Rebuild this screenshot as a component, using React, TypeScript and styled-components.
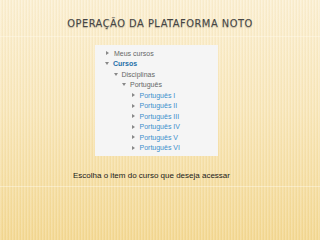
import React from "react";
import styled, { createGlobalStyle } from "styled-components";

const Global = createGlobalStyle`
  html, body { margin: 0; padding: 0; }
  body { font-family: "Liberation Sans", Arial, sans-serif; }
`;

const Page = styled.div`
  width: 320px;
  height: 240px;
  overflow: hidden;
  box-sizing: border-box;
  padding-top: 17px;
  display: flex;
  flex-direction: column;
  background:
    repeating-linear-gradient(90deg, rgba(255,255,255,0.16) 0px, rgba(255,255,255,0.16) 1px, rgba(200,160,60,0.07) 2px, rgba(200,160,60,0.07) 3px),
    linear-gradient(180deg, #fcf1d6 0%, #f9e8bd 45%, #f4d994 100%);
`;

const Title = styled.h1`
  margin: 0;
  height: 14px;
  line-height: 14px;
  text-align: center;
  font-family: "DejaVu Sans Condensed", "DejaVu Sans", sans-serif;
  font-stretch: condensed;
  font-weight: normal;
  font-size: 11px;
  letter-spacing: 0.5px;
  color: #454545;
  text-shadow: 0 1px 1px rgba(0, 0, 0, 0.25);
`;

const Divider = styled.div<{ $top: number }>`
  height: 1px;
  margin-top: ${(p) => p.$top}px;
  background: rgba(255, 250, 235, 0.45);
`;

const Panel = styled.div`
  margin: 8px 0 0 95px;
  width: 123px;
  height: 111px;
  box-sizing: border-box;
  padding-top: 3px;
  background: #f5f5f5;
  display: flex;
  flex-direction: column;
`;

const Row = styled.div<{ $level: number }>`
  display: flex;
  align-items: center;
  height: 10.5px;
  padding-left: ${(p) => 10 + p.$level * 8.5}px;
  gap: 4px;
  font-size: 7px;
  white-space: nowrap;
`;

const Label = styled.span<{ $kind: "plain" | "strong" | "link" }>`
  color: ${(p) => (p.$kind === "plain" ? "#666666" : p.$kind === "strong" ? "#1f6fa8" : "#3b8fcc")};
  font-weight: ${(p) => (p.$kind === "strong" ? "bold" : "normal")};
`;

const Arrow = styled.span<{ $open: boolean }>`
  width: 0;
  height: 0;
  flex: none;
  ${(p) =>
    p.$open
      ? `border-left: 2.5px solid transparent; border-right: 2.5px solid transparent; border-top: 3px solid #888;`
      : `border-top: 2.5px solid transparent; border-bottom: 2.5px solid transparent; border-left: 3px solid #888; margin: 0 1px;`}
`;

const Caption = styled.p`
  margin: 15px 0 0 73px;
  height: 10px;
  line-height: 10px;
  font-size: 8px;
  color: #1a1a1a;
`;

type Item = { label: string; level: number; open: boolean; kind: "plain" | "strong" | "link" };

const items: Item[] = [
  { label: "Meus cursos", level: 0, open: false, kind: "plain" },
  { label: "Cursos", level: 0, open: true, kind: "strong" },
  { label: "Disciplinas", level: 1, open: true, kind: "plain" },
  { label: "Português", level: 2, open: true, kind: "plain" },
  { label: "Português I", level: 3, open: false, kind: "link" },
  { label: "Português II", level: 3, open: false, kind: "link" },
  { label: "Português III", level: 3, open: false, kind: "link" },
  { label: "Português IV", level: 3, open: false, kind: "link" },
  { label: "Português V", level: 3, open: false, kind: "link" },
  { label: "Português VI", level: 3, open: false, kind: "link" },
];

export default function App() {
  return (
    <>
      <Global />
      <Page>
        <Title>OPERAÇÃO DA PLATAFORMA NOTO</Title>
        <Divider $top={5} />
        <Panel>
          {items.map((it) => (
            <Row key={it.label} $level={it.level}>
              <Arrow $open={it.open} />
              <Label $kind={it.kind}>{it.label}</Label>
            </Row>
          ))}
        </Panel>
        <Caption>Escolha o item do curso que deseja acessar</Caption>
        <Divider $top={5} />
      </Page>
    </>
  );
}
